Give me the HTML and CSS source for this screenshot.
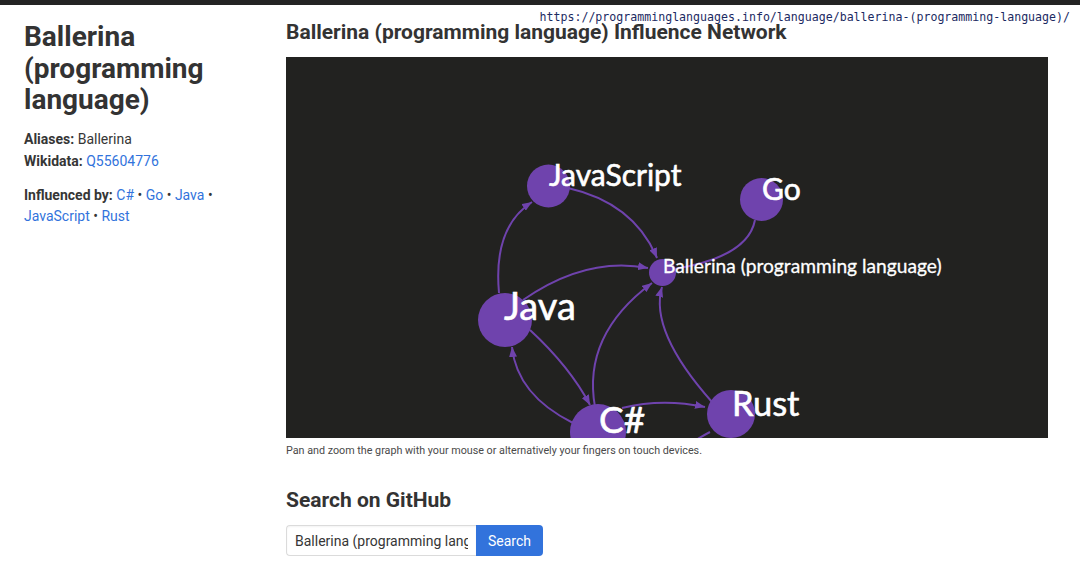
FILE: index.html
```html
<!DOCTYPE html>
<html lang="en">
<head>
<meta charset="utf-8">
<title>Ballerina (programming language)</title>
<link rel="stylesheet" href="styles.css">
</head>
<body>
<div class="topbar"></div>
<div class="url">https://programminglanguages.info/language/ballerina-(programming-language)/</div>
<div class="layout">
  <aside class="sidebar">
    <h1 class="title">Ballerina (programming language)</h1>
    <p class="meta"><b>Aliases:</b> Ballerina<br><b>Wikidata:</b> <a href="#">Q55604776</a></p>
    <p class="influenced"><b>Influenced by:</b> <a href="#">C#</a> • <a href="#">Go</a> • <a href="#">Java</a> • <a href="#">JavaScript</a> • <a href="#">Rust</a></p>
  </aside>
  <main class="main">
    <h2 class="section-title">Ballerina (programming language) Influence Network</h2>
    <div class="graph">
      <svg width="762" height="381" viewBox="0 0 762 381">
        <defs>
          <marker id="arr" viewBox="0 0 10 8" refX="10" refY="4" markerWidth="10" markerHeight="8" markerUnits="userSpaceOnUse" orient="auto">
            <path d="M0 0 L10 4 L0 8 Z" fill="#6f43ad"/>
          </marker>
        </defs>
        <g class="edges" fill="none" stroke="#6f43ad" stroke-width="2">
          <path d="M213 236 Q207 170 246 145" marker-end="url(#arr)"/>
          <path d="M282 131 Q348 146 371 201" marker-end="url(#arr)"/>
          <path d="M469 163 Q462 200 388 212"/>
          <path d="M237 243 Q300 199 362 211" marker-end="url(#arr)"/>
          <path d="M244 273 Q284 310 304 348" marker-end="url(#arr)"/>
          <path d="M287 366 Q231 338 226 290" marker-end="url(#arr)"/>
          <path d="M309 350 Q296 278 366 226" marker-end="url(#arr)"/>
          <path d="M426 345 Q363 274 376 230" marker-end="url(#arr)"/>
          <path d="M336 351 Q376 341 419 350" marker-end="url(#arr)"/>
          <path d="M424 375 Q405 385 385 400"/>
        </g>
        <g class="nodes" fill="#6f43ad">
          <circle cx="262.5" cy="129" r="21.5"/>
          <circle cx="475.5" cy="142.5" r="21.5"/>
          <circle cx="376.5" cy="215.5" r="13.5"/>
          <circle cx="219" cy="263" r="27"/>
          <circle cx="312" cy="375" r="28"/>
          <circle cx="445" cy="357" r="24"/>
        </g>
        <g class="labels" fill="#ffffff" stroke="#ffffff" stroke-width="0.6">
          <text x="263" y="129" font-size="30">JavaScript</text>
          <text x="476" y="143" font-size="30">Go</text>
          <text x="377" y="216" font-size="19.2" stroke-width="0.3">Ballerina (programming language)</text>
          <text x="218" y="263" font-size="38">Java</text>
          <text x="313" y="376" font-size="37">C#</text>
          <text x="446" y="359" font-size="34.5">Rust</text>
        </g>
      </svg>
    </div>
    <p class="caption">Pan and zoom the graph with your mouse or alternatively your fingers on touch devices.</p>
    <h2 class="section-title search-title">Search on GitHub</h2>
    <form class="search">
      <input class="search-input" type="text" value="Ballerina (programming language)">
      <button class="search-btn" type="button">Search</button>
    </form>
  </main>
</div>
</body>
</html>
```
FILE: styles.css
```css
html, body {
  margin: 0;
  padding: 0;
  background: #ffffff;
}
body {
  font-family: Roboto, "Liberation Sans", sans-serif;
  color: #363636;
  font-size: 14px;
}
.topbar {
  height: 5px;
  background: #232323;
}
.url {
  position: absolute;
  top: 9px;
  right: 10px;
  font-family: "DejaVu Sans Mono", monospace;
  font-size: 11.6px;
  line-height: 16px;
  color: #1b2a62;
}
.layout {
  display: flex;
  padding-top: 14px;
}
.sidebar {
  width: 238px;
  padding-left: 24px;
  padding-right: 24px;
  flex: none;
}
.title {
  margin: 2px 0 12px;
  font-size: 28px;
  line-height: 31.5px;
  font-weight: 700;
  color: #333;
}
.meta {
  margin: 0 0 13px;
  line-height: 22px;
}
.influenced {
  margin: 0;
  line-height: 21px;
}
b {
  font-weight: 700;
  color: #363636;
}
a {
  color: #3273dc;
  text-decoration: none;
}
.main {
  width: 762px;
  flex: none;
}
.section-title {
  margin: 0 0 11px;
  font-size: 21px;
  line-height: 26.6px;
  font-weight: 700;
  color: #333;
}
.graph {
  width: 762px;
  height: 381px;
  background: #222220;
  overflow: hidden;
}
.graph svg {
  display: block;
}
.labels text {
  font-family: Lato, "Open Sans", sans-serif;
}
.caption {
  margin: 5px 0 0;
  font-size: 10.75px;
  line-height: 16px;
  color: #4a4a4a;
}
.search-title {
  margin-top: 28px;
  margin-bottom: 12px;
}
.search {
  display: flex;
  margin: 0;
}
.search-input {
  width: 190px;
  height: 31px;
  box-sizing: border-box;
  border: 1px solid #dbdbdb;
  border-right: none;
  border-radius: 4px 0 0 4px;
  padding: 0 8px;
  font-family: Roboto, "Liberation Sans", sans-serif;
  font-size: 14px;
  color: #363636;
  background: #fff;
  outline: none;
  box-shadow: inset 0 1px 2px rgba(10,10,10,0.05);
}
.search-btn {
  height: 31px;
  padding: 0 12px;
  border: none;
  border-radius: 0 4px 4px 0;
  background: #3273dc;
  color: #fff;
  font-family: Roboto, "Liberation Sans", sans-serif;
  font-size: 14px;
}
```
